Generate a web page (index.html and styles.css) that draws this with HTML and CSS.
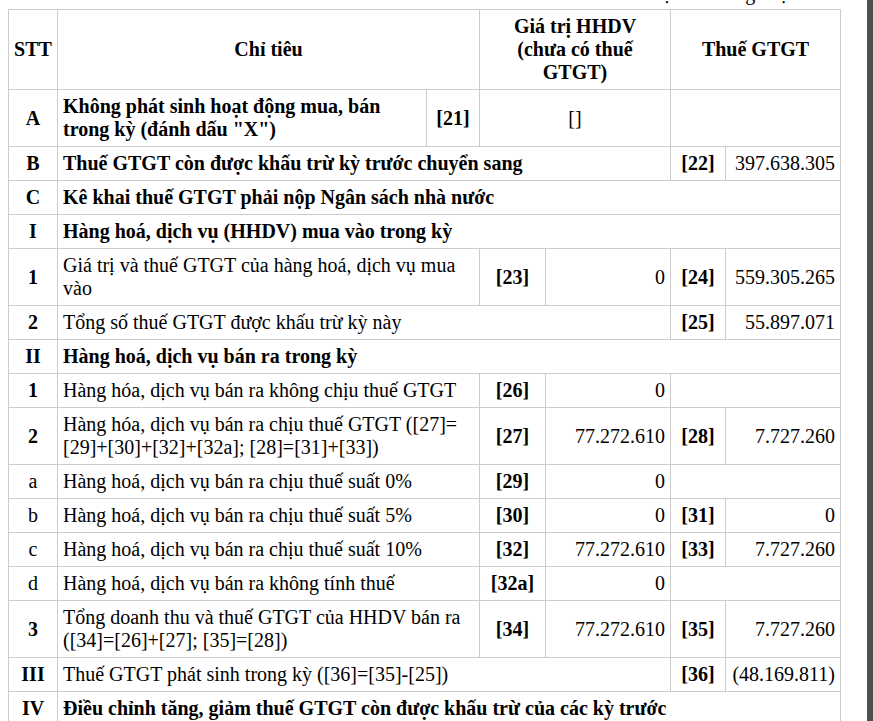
FILE: index.html
```html
<!DOCTYPE html>
<html lang="vi">
<head>
<meta charset="utf-8">
<title>Tờ khai thuế GTGT</title>
<link rel="stylesheet" href="styles.css">
</head>
<body>
<div class="page">
  <div class="unit">Đơn vị tiền: đồng Việt Nam</div>
  <table class="form">
    <colgroup>
      <col class="c1"><col class="c2"><col class="c3"><col class="c4"><col class="c5"><col class="c6"><col class="c7">
    </colgroup>
    <thead>
      <tr class="head">
        <th>STT</th>
        <th colspan="2">Chỉ tiêu</th>
        <th colspan="2">Giá trị HHDV<br>(chưa có thuế<br>GTGT)</th>
        <th colspan="2">Thuế GTGT</th>
      </tr>
    </thead>
    <tbody>
      <tr>
        <td class="stt">A</td>
        <td class="txt b">Không phát sinh hoạt động mua, bán trong kỳ (đánh dấu "X")</td>
        <td class="code">[21]</td>
        <td class="mid" colspan="2">[]</td>
        <td colspan="2"></td>
      </tr>
      <tr>
        <td class="stt">B</td>
        <td class="txt b" colspan="4">Thuế GTGT còn được khấu trừ kỳ trước chuyển sang</td>
        <td class="code">[22]</td>
        <td class="num">397.638.305</td>
      </tr>
      <tr>
        <td class="stt">C</td>
        <td class="txt b" colspan="6">Kê khai thuế GTGT phải nộp Ngân sách nhà nước</td>
      </tr>
      <tr>
        <td class="stt">I</td>
        <td class="txt b" colspan="6">Hàng hoá, dịch vụ (HHDV) mua vào trong kỳ</td>
      </tr>
      <tr>
        <td class="stt">1</td>
        <td class="txt" colspan="2">Giá trị và thuế GTGT của hàng hoá, dịch vụ mua vào</td>
        <td class="code">[23]</td>
        <td class="num">0</td>
        <td class="code">[24]</td>
        <td class="num">559.305.265</td>
      </tr>
      <tr>
        <td class="stt">2</td>
        <td class="txt" colspan="4">Tổng số thuế GTGT được khấu trừ kỳ này</td>
        <td class="code">[25]</td>
        <td class="num">55.897.071</td>
      </tr>
      <tr>
        <td class="stt">II</td>
        <td class="txt b" colspan="6">Hàng hoá, dịch vụ bán ra trong kỳ</td>
      </tr>
      <tr>
        <td class="stt">1</td>
        <td class="txt" colspan="2">Hàng hóa, dịch vụ bán ra không chịu thuế GTGT</td>
        <td class="code">[26]</td>
        <td class="num">0</td>
        <td colspan="2"></td>
      </tr>
      <tr>
        <td class="stt">2</td>
        <td class="txt" colspan="2">Hàng hóa, dịch vụ bán ra chịu thuế GTGT ([27]= [29]+[30]+[32]+[32a]; [28]=[31]+[33])</td>
        <td class="code">[27]</td>
        <td class="num">77.272.610</td>
        <td class="code">[28]</td>
        <td class="num">7.727.260</td>
      </tr>
      <tr>
        <td class="stt n">a</td>
        <td class="txt" colspan="2">Hàng hoá, dịch vụ bán ra chịu thuế suất 0%</td>
        <td class="code">[29]</td>
        <td class="num">0</td>
        <td colspan="2"></td>
      </tr>
      <tr>
        <td class="stt n">b</td>
        <td class="txt" colspan="2">Hàng hoá, dịch vụ bán ra chịu thuế suất 5%</td>
        <td class="code">[30]</td>
        <td class="num">0</td>
        <td class="code">[31]</td>
        <td class="num">0</td>
      </tr>
      <tr>
        <td class="stt n">c</td>
        <td class="txt" colspan="2">Hàng hoá, dịch vụ bán ra chịu thuế suất 10%</td>
        <td class="code">[32]</td>
        <td class="num">77.272.610</td>
        <td class="code">[33]</td>
        <td class="num">7.727.260</td>
      </tr>
      <tr>
        <td class="stt n">d</td>
        <td class="txt" colspan="2">Hàng hoá, dịch vụ bán ra không tính thuế</td>
        <td class="code">[32a]</td>
        <td class="num">0</td>
        <td colspan="2"></td>
      </tr>
      <tr>
        <td class="stt">3</td>
        <td class="txt" colspan="2">Tổng doanh thu và thuế GTGT của HHDV bán ra ([34]=[26]+[27]; [35]=[28])</td>
        <td class="code">[34]</td>
        <td class="num">77.272.610</td>
        <td class="code">[35]</td>
        <td class="num">7.727.260</td>
      </tr>
      <tr>
        <td class="stt">III</td>
        <td class="txt" colspan="4">Thuế GTGT phát sinh trong kỳ ([36]=[35]-[25])</td>
        <td class="code">[36]</td>
        <td class="num">(48.169.811)</td>
      </tr>
      <tr>
        <td class="stt">IV</td>
        <td class="txt b" colspan="6">Điều chỉnh tăng, giảm thuế GTGT còn được khấu trừ của các kỳ trước</td>
      </tr>
    </tbody>
  </table>
</div>
<div class="scrollbar"></div>
</body>
</html>
```

FILE: styles.css
```css
html, body {
  margin: 0;
  padding: 0;
  background: #ffffff;
}

body {
  padding: 0 8px;
  font-family: "Liberation Serif", "Times New Roman", serif;
  font-size: 20px;
  line-height: 23px;
  color: #000000;
  overflow: hidden;
  height: 721px;
}

.page {
  width: 832px;
}

.unit {
  margin-top: -18px;
  text-align: right;
  padding-right: 3px;
  height: 23px;
}

.form {
  margin-top: 4px;
  width: 832px;
  border-collapse: collapse;
  table-layout: fixed;
}

.c1 { width: 49px; }
.c2 { width: 369px; }
.c3 { width: 53px; }
.c4 { width: 66px; }
.c5 { width: 125px; }
.c6 { width: 55px; }
.c7 { width: 115px; }

.form th,
.form td {
  border: 1px solid #cccccc;
  padding: 5px 5px;
  vertical-align: middle;
}

.form th {
  font-weight: bold;
  text-align: center;
}

.head th {
  height: 69px;
}

.stt {
  text-align: center;
  font-weight: bold;
}

.stt.n {
  font-weight: normal;
}

.txt {
  text-align: left;
}

.b {
  font-weight: bold;
}

.code {
  text-align: center;
  font-weight: bold;
  white-space: nowrap;
}

.mid {
  text-align: center;
}

.num {
  text-align: right;
  white-space: nowrap;
}

.scrollbar {
  position: fixed;
  top: 0;
  right: 0;
  width: 6px;
  height: 100%;
  background: #4f4f4f;
}
```
